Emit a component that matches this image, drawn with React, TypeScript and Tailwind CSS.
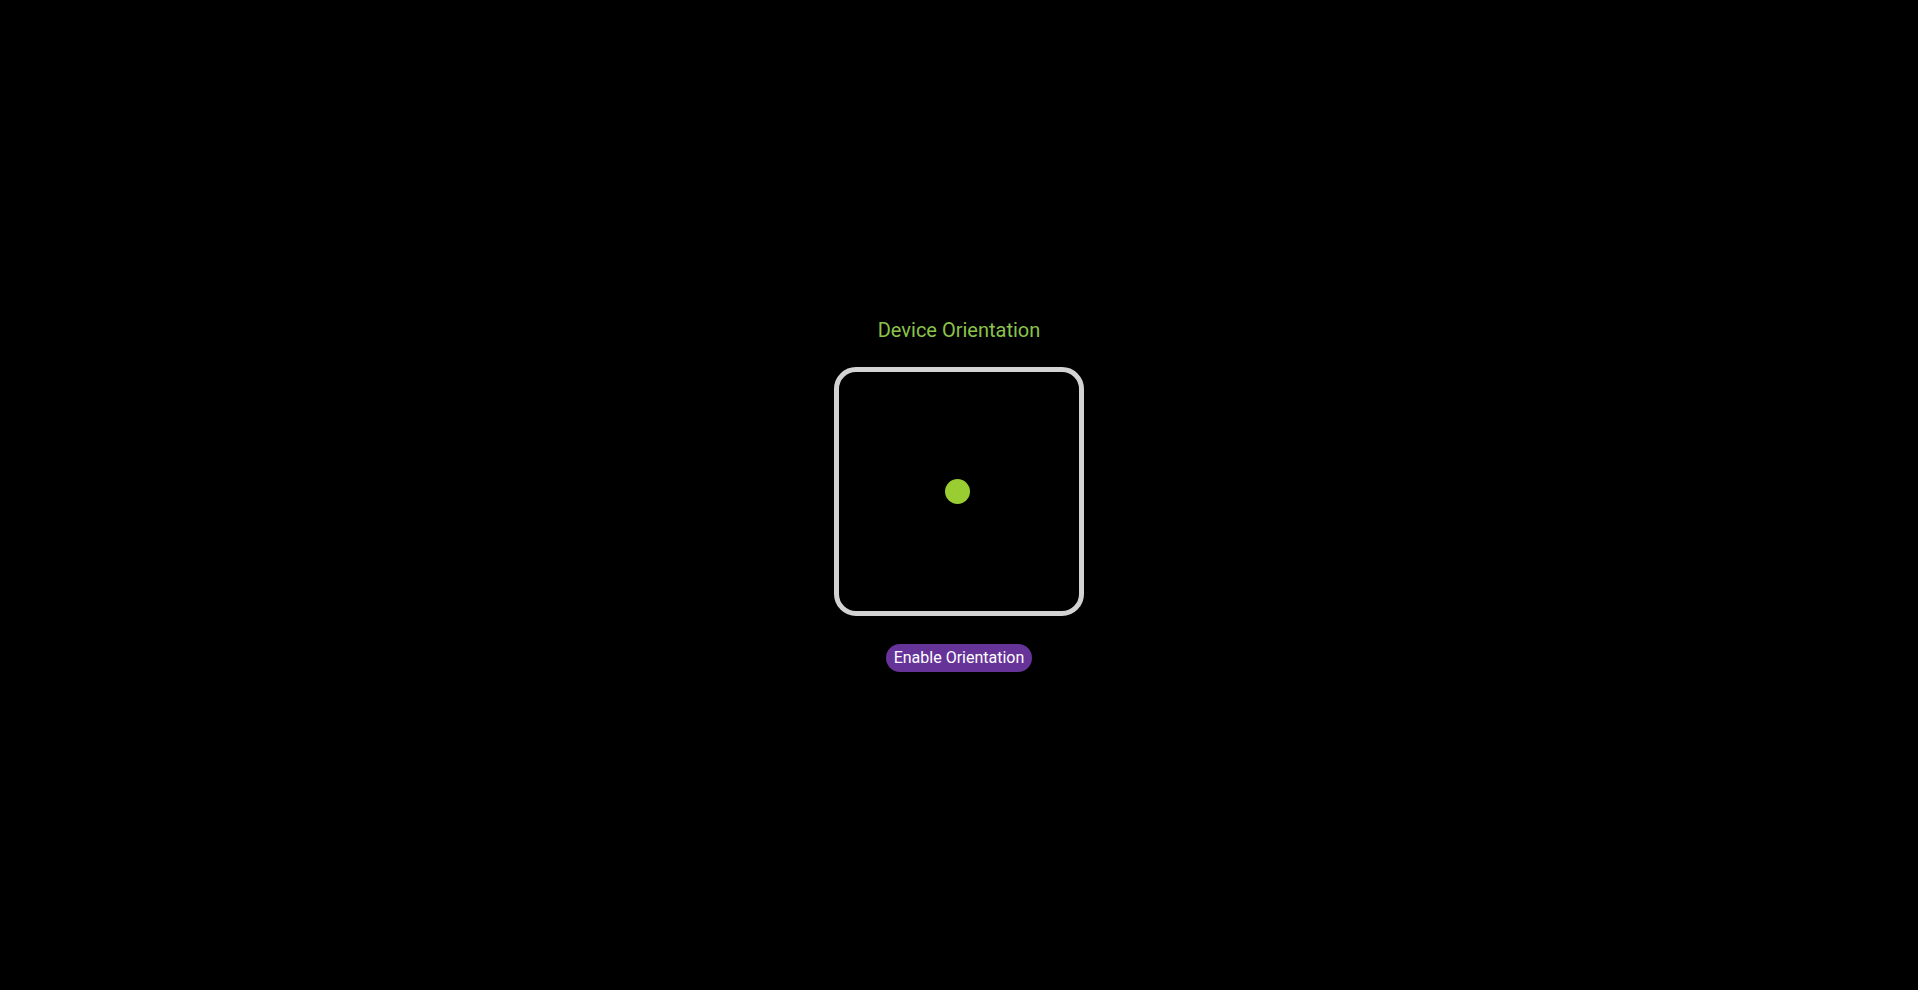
export default function App() {
  return (
    <div
      className="flex h-screen w-full flex-col items-center justify-center bg-black"
      style={{ fontFamily: "Roboto, 'Noto Sans', sans-serif" }}
    >
      <h1 className="text-[20px] leading-[23px] text-[#8bc34a]">Device Orientation</h1>
      <div className="mt-[25px] flex h-[249px] w-[250px] items-center justify-center rounded-[22px] border-[5px] border-[#d3d3d3]">
        <div className="-ml-[3px] h-[25px] w-[25px] rounded-full bg-[#9acd32]"></div>
      </div>
      <button className="mt-[28px] rounded-full bg-[#663399] px-[8px] py-[5px] text-[16px] leading-[18px] text-white">
        Enable Orientation
      </button>
    </div>
  );
}
